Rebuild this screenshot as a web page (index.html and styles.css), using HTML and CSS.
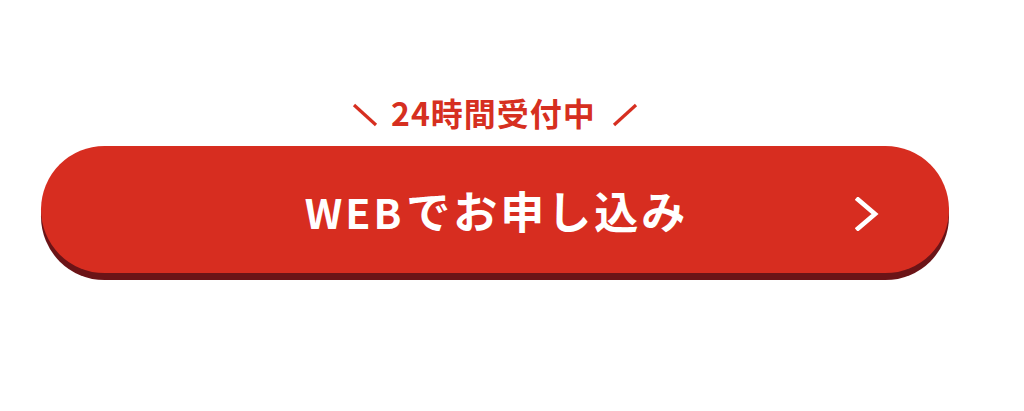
FILE: index.html
```html
<!DOCTYPE html>
<html lang="ja">
<head>
<meta charset="utf-8">
<link rel="stylesheet" href="styles.css">
</head>
<body>
<div class="cta">
  <p class="cta-caption">
    <svg class="slash" viewBox="0 0 26 24" width="26" height="24"><line x1="2" y1="2" x2="24" y2="22"/></svg>
    <span class="caption-text">24時間受付中</span>
    <svg class="slash" viewBox="0 0 26 24" width="26" height="24"><line x1="24" y1="2" x2="2" y2="22"/></svg>
  </p>
  <a class="cta-button" href="#">
    <span class="cta-spacer"></span>
    <span class="cta-label"><span class="latin">WEB</span>でお申し込み</span>
    <span class="cta-arrow">
      <svg viewBox="0 0 24 34" width="24" height="34"><polyline points="3,2.5 20,17 3,31.5"/></svg>
    </span>
  </a>
</div>
</body>
</html>
```

FILE: styles.css
```css
html, body {
  margin: 0;
  padding: 0;
  background: #ffffff;
}

body {
  width: 1024px;
  height: 411px;
  overflow: hidden;
  font-family: "Noto Sans CJK JP", "Noto Sans", sans-serif;
}

.cta {
  display: flex;
  flex-direction: column;
  align-items: center;
  padding-top: 94px;
  padding-left: 41px;
  width: 908px;
}

.cta-caption {
  margin: 0;
  display: flex;
  align-items: center;
  gap: 13px;
  height: 36px;
  color: #d62f20;
}

.caption-text {
  font-size: 32px;
  font-weight: 700;
  letter-spacing: 1px;
  line-height: 36px;
  margin-right: 3px;
}

.slash {
  display: block;
  margin-top: 6px;
}

.slash line {
  stroke: #d62f20;
  stroke-width: 3.2;
  stroke-linecap: butt;
}

.cta-button {
  margin-top: 16px;
  width: 908px;
  height: 127px;
  box-sizing: border-box;
  border-radius: 64px;
  background: #d72d20;
  box-shadow: 0 7px 0 #6b1417;
  display: grid;
  grid-template-columns: 1fr auto 1fr;
  align-items: center;
  text-decoration: none;
  color: #ffffff;
  padding-top: 2px;
}

.cta-label {
  font-size: 44px;
  font-weight: 700;
  letter-spacing: 3px;
  line-height: 52px;
  white-space: nowrap;
  margin-right: -3px;
}

.cta-label .latin {
  font-family: "Noto Sans CJK JP", "Noto Sans", sans-serif;
  font-size: 41px;
  letter-spacing: 3px;
  margin-right: 2px;
}

.cta-arrow {
  justify-self: end;
  padding-right: 70px;
  display: flex;
  align-items: center;
  padding-top: 6px;
}

.cta-arrow svg {
  display: block;
}

.cta-arrow polyline {
  fill: none;
  stroke: #ffffff;
  stroke-width: 4.6;
  stroke-linecap: square;
  stroke-linejoin: miter;
}
```
